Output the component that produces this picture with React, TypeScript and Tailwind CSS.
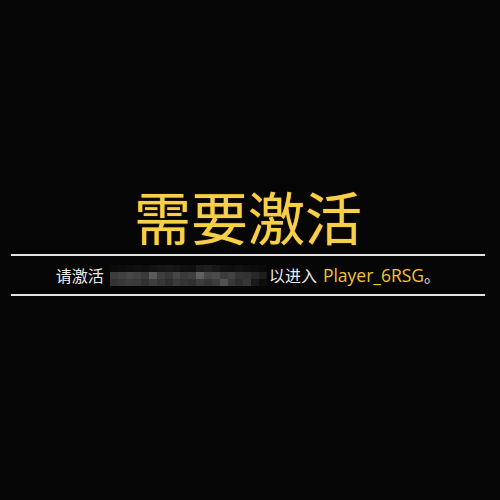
import React from "react";

const mosaic: number[][] = [
  [10, 12, 14, 16, 14, 18, 22, 24, 20, 16, 14, 26, 30, 22, 16, 14, 18, 14, 12, 10],
  [60, 64, 70, 66, 58, 90, 62, 54, 70, 58, 62, 96, 70, 74, 60, 66, 52, 50, 40, 30],
  [52, 56, 60, 58, 50, 62, 54, 46, 58, 52, 48, 60, 52, 60, 80, 56, 46, 54, 26, 14],
];

function g(v: number) {
  const h = Math.max(0, Math.min(255, v)).toString(16).padStart(2, "0");
  return `#${h}${h}${h}`;
}

export default function App() {
  return (
    <div className="w-[500px] h-[500px] bg-[#060606] overflow-hidden" style={{ fontFamily: '"Noto Sans CJK SC", "Noto Sans", sans-serif' }}>
      <div className="ml-[11px] w-[474px] pt-[177px] flex flex-col items-center">
        <div className="text-[57px] leading-[76px] text-[#f8cf48] [text-shadow:0_0_1px_#7a5a00,0_0_1px_#7a5a00]">需要激活</div>
        <div className="w-full h-[2px] bg-[#e2e2e2] mt-[1px]" />
        <div className="h-[38px] w-full flex items-center justify-center text-[16px] text-[#ececec]">
          <span>请激活</span>
          <div className="ml-[6px] mr-[2px] w-[157px] flex flex-col">
            {mosaic.map((row, i) => (
              <div key={i} className="flex">
                {row.map((v, j) => (
                  <div key={j} className="flex-1 h-[7px]" style={{ backgroundColor: g(v) }} />
                ))}
              </div>
            ))}
          </div>
          <span>以进入</span>
          <span className="ml-[6px] text-[17.5px] text-[#f2c233]" style={{ fontFamily: '"Open Sans", "Noto Sans CJK SC", sans-serif' }}>Player_6RSG</span>
          <span>。</span>
        </div>
        <div className="w-full h-[2px] bg-[#e2e2e2]" />
      </div>
    </div>
  );
}
